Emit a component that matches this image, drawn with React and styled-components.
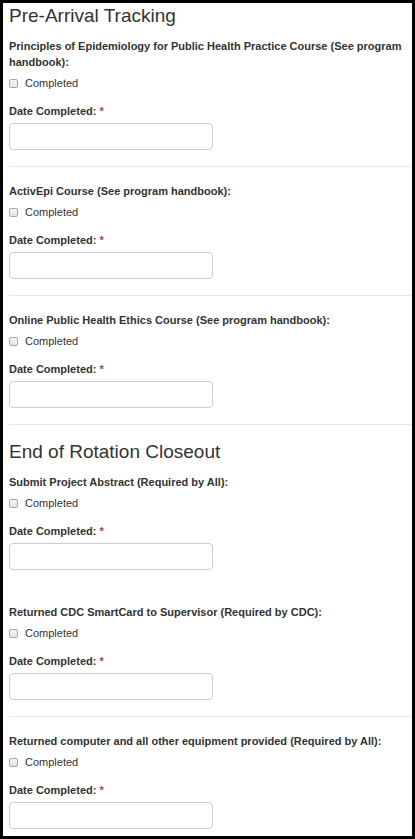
import React from 'react'
import styled, { createGlobalStyle } from 'styled-components'

const GlobalStyle = createGlobalStyle`
  html, body {
    margin: 0;
    padding: 0;
    background: #fff;
  }
  body {
    font-family: "Liberation Sans", Arial, sans-serif;
    color: #333;
  }
`

const Frame = styled.div`
  box-sizing: border-box;
  width: 415px;
  height: 839px;
  border: 3px solid #000;
  background: #fff;
  overflow: hidden;
  padding-left: 6px;
`

const Title = styled.h3`
  margin: 0 0 11px 0;
  padding-top: ${p => (p.first ? '2px' : '16px')};
  font-size: 19px;
  line-height: 22px;
  font-weight: normal;
  color: #333;
`

const Item = styled.div`
  padding: ${p => (p.afterTitle ? '0' : '16px')} 0 ${p => (p.noLine ? '17px' : '16px')} 0;
  border-bottom: 1px solid ${p => (p.noLine ? 'transparent' : '#e8e8e8')};
`

const Label = styled.div`
  font-size: 11px;
  line-height: 16px;
  font-weight: bold;
  color: #333;
  margin-bottom: ${p => p.gap || 0}px;
`

const CheckRow = styled.label`
  display: flex;
  align-items: center;
  height: 16px;
  margin-bottom: 12px;
  font-size: 11px;
  color: #333;
`

const Box = styled.span`
  box-sizing: border-box;
  width: 9px;
  height: 9px;
  border: 1px solid #a8a8a8;
  border-radius: 2px;
  background: linear-gradient(#f4f4f4, #e2e2e2);
  margin-right: 7px;
`

const Req = styled.span`
  color: #a94442;
`

const Input = styled.div`
  box-sizing: border-box;
  width: 204px;
  height: 27px;
  border: 1px solid #ccc;
  border-radius: 4px;
  background: #fff;
  margin-top: 4px;
`

const Task = ({ text, afterTitle, noLine }) => (
  <Item afterTitle={afterTitle} noLine={noLine}>
    <Label gap={5}>{text}</Label>
    <CheckRow>
      <Box />
      Completed
    </CheckRow>
    <Label>
      Date Completed: <Req>*</Req>
    </Label>
    <Input />
  </Item>
)

const App = () => (
  <>
    <GlobalStyle />
    <Frame>
      <Title first>Pre-Arrival Tracking</Title>
      <Task
        afterTitle
        text="Principles of Epidemiology for Public Health Practice Course (See program handbook):"
      />
      <Task text="ActivEpi Course (See program handbook):" />
      <Task text="Online Public Health Ethics Course (See program handbook):" />
      <Title>End of Rotation Closeout</Title>
      <Task afterTitle noLine text="Submit Project Abstract (Required by All):" />
      <Task text="Returned CDC SmartCard to Supervisor (Required by CDC):" />
      <Task text="Returned computer and all other equipment provided (Required by All):" />
    </Frame>
  </>
)

export default App
